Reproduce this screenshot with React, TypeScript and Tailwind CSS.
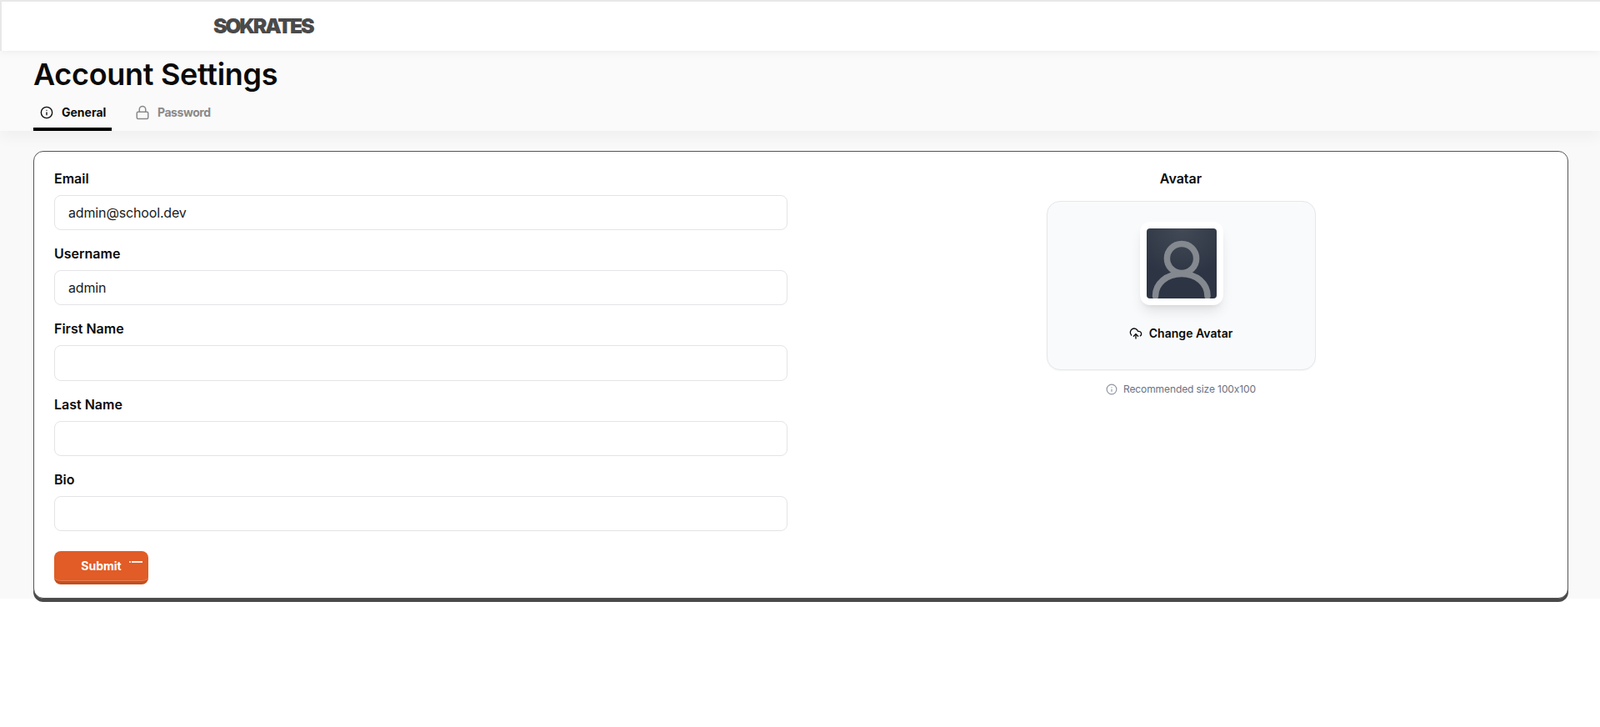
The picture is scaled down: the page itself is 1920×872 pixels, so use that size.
import { Info, Lock, CloudUpload } from "lucide-react";

const fields = [
  { label: "Email", value: "admin@school.dev" },
  { label: "Username", value: "admin" },
  { label: "First Name", value: "" },
  { label: "Last Name", value: "" },
  { label: "Bio", value: "" },
];

export default function App() {
  return (
    <div className="min-h-[872px] bg-white font-[Inter,sans-serif] text-[#0a0a0a]">
      <div className="bg-[#f9f9f9]">
        <header className="relative z-10 h-[61px] border-t-2 border-l-2 border-[#e8e8e8] bg-white pl-[254px] shadow-[0_2px_8px_rgba(0,0,0,0.05)] flex items-center">
          <span className="text-[25px] font-black tracking-[-2.4px] leading-none text-[#4a4a4a]">SOKRATES</span>
        </header>
        <section className="relative bg-[#fafafa] px-10 h-[96px] shadow-[0_8px_16px_rgba(0,0,0,0.04)]">
          <h1 className="text-[36px] font-semibold leading-[44px] pt-[6px] box-content tracking-[-0.3px]">Account Settings</h1>
          <div className="flex mt-[5px] text-[14px] font-bold">
            <div className="h-[41px] w-[94px] border-b-4 border-black flex items-center pl-2 gap-[10px]">
              <Info size={16} strokeWidth={2} />
              <span>General</span>
            </div>
            <div className="h-[41px] pb-1 flex items-center pl-[28px] gap-[9px] text-[#8a8a8a] tracking-[-0.45px]">
              <Lock size={18} strokeWidth={2} />
              <span>Password</span>
            </div>
          </div>
        </section>
        <main className="pl-10 pr-[38px] pt-6">
          <div className="grid grid-cols-2 gap-8 rounded-xl border border-[#555] bg-white px-6 pt-5 pb-4 shadow-[0_4px_0_#4a4a4a]">
            <div>
              {fields.map((f) => (
                <div key={f.label} className="mb-4">
                  <label className="block h-6 mb-2 text-[16px] font-semibold leading-6">{f.label}</label>
                  <input
                    readOnly
                    value={f.value}
                    className="block w-full h-[42.2px] rounded-lg border border-[#e4e4e7] bg-white px-4 text-[16px] tracking-[-0.15px] text-[#1a1a1a] outline-none"
                  />
                </div>
              ))}
              <button className="relative mt-[8px] h-10 w-[113px] rounded-lg bg-[#e15c26] border-b-4 border-[#c44f1e] shadow-[inset_0_-1px_0_rgba(255,255,255,0.2)] text-[14px] font-bold text-white">
                <span className="relative">Submit</span>
                <span className="absolute left-[90px] top-[12px] flex gap-[1px] items-center">
                  <span className="h-[2px] w-[2px] bg-white/80" />
                  <span className="h-[2.5px] w-[13px] bg-white/90" />
                </span>
              </button>
            </div>
            <div className="flex flex-col items-center">
              <div className="h-6 text-[16px] font-semibold leading-6">Avatar</div>
              <div className="mt-[15px] h-[203px] w-[323px] rounded-2xl border border-[#e5e7eb] bg-[#f9fafb] flex flex-col items-center pt-6 shadow-[0_1px_2px_rgba(0,0,0,0.04)]">
                <div className="ml-[2px] h-[100px] w-[100px] rounded-xl bg-white p-2 shadow-[0_10px_15px_-3px_rgba(0,0,0,0.1),0_4px_6px_-4px_rgba(0,0,0,0.1)]">
                  <svg viewBox="0 0 84 84" className="block h-[84px] w-[84px] rounded">
                    <defs>
                      <radialGradient id="av" cx="50%" cy="0%" r="70%">
                        <stop offset="0%" stopColor="#434a56" />
                        <stop offset="100%" stopColor="#2d3544" />
                      </radialGradient>
                    </defs>
                    <rect width="84" height="84" fill="url(#av)" />
                    <circle cx="42" cy="36" r="17.6" fill="none" stroke="#84888f" strokeWidth="7.5" />
                    <path d="M10.5 81C10.5 66 24 54.5 42 54.5S73 66 73 81" fill="none" stroke="#84888f" strokeWidth="7.5" strokeLinecap="round" />
                  </svg>
                </div>
                <div className="mt-[23px] flex items-center gap-2 text-[14px] font-semibold tracking-[0.05px]">
                  <CloudUpload size={16} strokeWidth={2} />
                  <span>Change Avatar</span>
                </div>
              </div>
              <div className="mt-[14px] flex items-center gap-[7px] text-[12px] text-[#6b7280]">
                <Info size={14} strokeWidth={2} className="text-[#8f95a0]" />
                <span className="tracking-[-0.1px]">Recommended size 100x100</span>
              </div>
            </div>
          </div>
        </main>
      </div>
    </div>
  );
}
